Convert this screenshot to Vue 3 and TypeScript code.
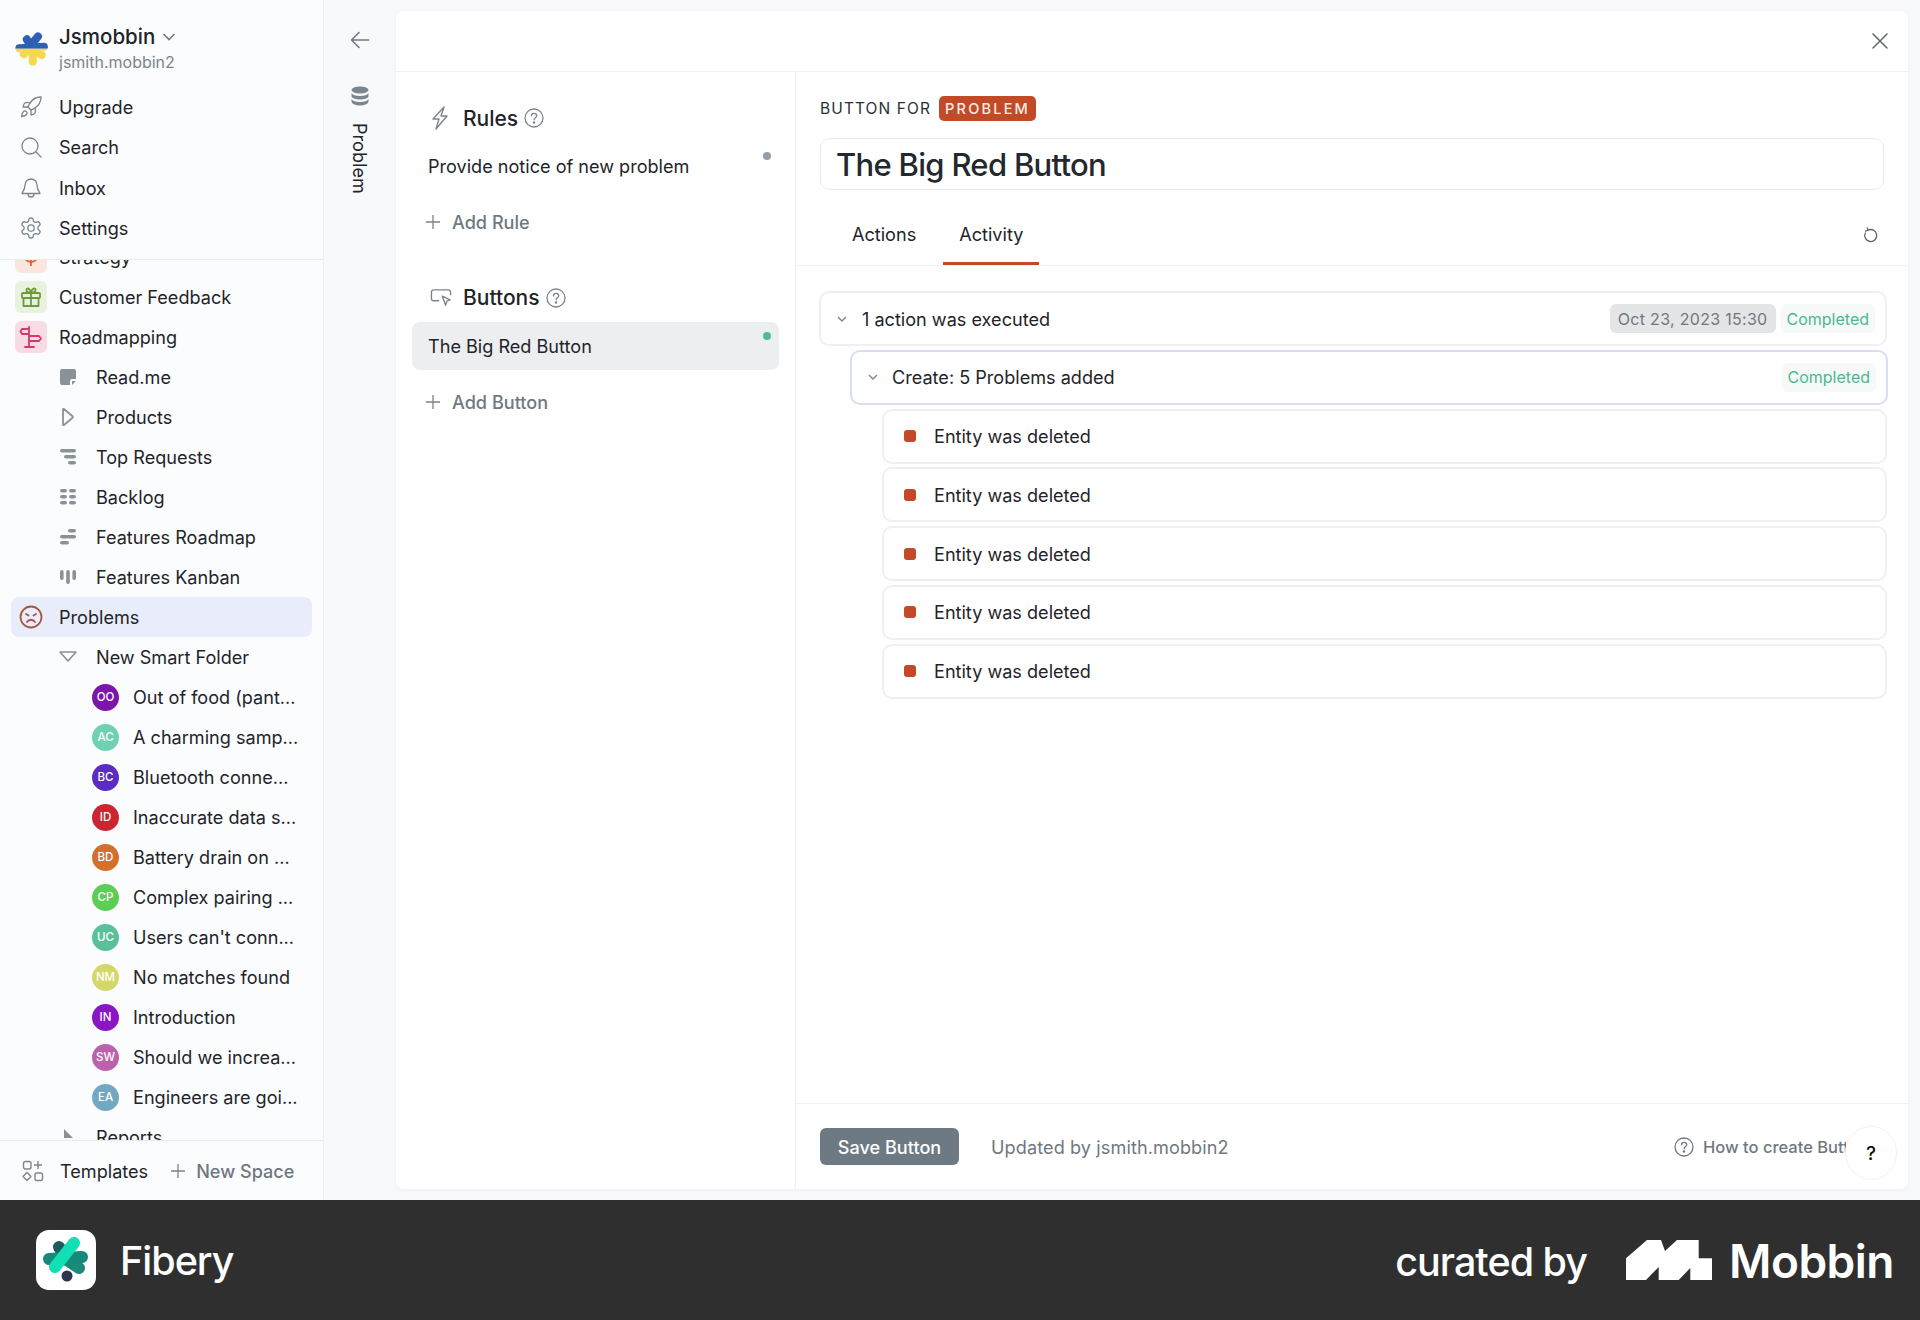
<script setup lang="ts">
const topLinks = [
  { label: 'Upgrade', icon: 'rocket' },
  { label: 'Search', icon: 'search' },
  { label: 'Inbox', icon: 'bell' },
  { label: 'Settings', icon: 'gear' },
];

const views = [
  { label: 'Read.me', icon: 'doc' },
  { label: 'Products', icon: 'tri' },
  { label: 'Top Requests', icon: 'list' },
  { label: 'Backlog', icon: 'grid' },
  { label: 'Features Roadmap', icon: 'gantt' },
  { label: 'Features Kanban', icon: 'kanban' },
];

const problems = [
  { code: 'OO', label: 'Out of food (pant...', color: '#7d16a8' },
  { code: 'AC', label: 'A charming samp...', color: '#6fd0b2' },
  { code: 'BC', label: 'Bluetooth conne...', color: '#5a2cc4' },
  { code: 'ID', label: 'Inaccurate data s...', color: '#cc2430' },
  { code: 'BD', label: 'Battery drain on ...', color: '#d2702c' },
  { code: 'CP', label: 'Complex pairing ...', color: '#5cce56' },
  { code: 'UC', label: "Users can't conn...", color: '#59c09a' },
  { code: 'NM', label: 'No matches found', color: '#d4d86a' },
  { code: 'IN', label: 'Introduction', color: '#8a16c4' },
  { code: 'SW', label: 'Should we increa...', color: '#bc62ac' },
  { code: 'EA', label: 'Engineers are goi...', color: '#72a8c2' },
];

const entities = [1, 2, 3, 4, 5];
</script>

<template>
  <div class="page">
    <div class="app">
      <aside class="sidebar">
        <div class="side-top">
          <div class="workspace">
            <svg class="ws-logo" width="34" height="34" viewBox="0 0 46 46" fill="none" stroke-width="11" stroke-linecap="round">
              <defs>
                <clipPath id="wsTop"><rect x="0" y="0" width="46" height="22.5" /></clipPath>
                <clipPath id="wsBottom"><rect x="0" y="22.5" width="46" height="24" /></clipPath>
                <g id="wsShape">
                  <path d="M31 6L12 30M6 22l33-2M16 10l8 13M36 31L24 23M24 23v17" />
                </g>
              </defs>
              <use href="#wsShape" stroke="#2d5fb4" clip-path="url(#wsTop)" />
              <use href="#wsShape" stroke="#f6d94a" clip-path="url(#wsBottom)" />
            </svg>
            <div class="ws-text">
              <div class="ws-name">
                Jsmobbin
                <svg width="14" height="10" viewBox="0 0 14 10" fill="none" stroke="#6f7880" stroke-width="1.6"><path d="M1.5 2L7 7.5 12.5 2" /></svg>
              </div>
              <div class="ws-user">jsmith.mobbin2</div>
            </div>
          </div>
          <a v-for="l in topLinks" :key="l.label" class="row top-row">
            <span class="top-icon">
              <svg width="24" height="24" viewBox="0 0 24 24" fill="none" stroke="#7b858d" stroke-width="1.3" stroke-linecap="round" stroke-linejoin="round">
                <template v-if="l.icon === 'rocket'">
                  <path d="M4.5 16.5c-1.5 1.26-2 5-2 5s3.74-.5 5-2c.71-.84.7-2.13-.09-2.91a2.18 2.18 0 0 0-2.91-.09z" />
                  <path d="M12 15l-3-3a22 22 0 0 1 2-3.95A12.88 12.88 0 0 1 22 2c0 2.72-.78 7.5-6 11a22.35 22.35 0 0 1-4 2z" />
                  <path d="M9 12H4s.55-3.03 2-4c1.62-1.08 5 0 5 0" />
                  <path d="M12 15v5s3.03-.55 4-2c1.08-1.62 0-5 0-5" />
                </template>
                <template v-else-if="l.icon === 'search'">
                  <circle cx="11" cy="11" r="8" />
                  <path d="M17 17l5 5" />
                </template>
                <template v-else-if="l.icon === 'bell'">
                  <path d="M12 3a6 6 0 0 0-6 6c0 5-3 7.5-3 8.5h18c0-1-3-3.500-3-8.500a6 6 0 0 0-6-6z" />
                  <path d="M9 18a3 3 0 0 0 6 0" />
                </template>
                <template v-else>
                  <path d="M12.22 2h-.44a2 2 0 0 0-2 2v.18a2 2 0 0 1-1 1.73l-.43.25a2 2 0 0 1-2 0l-.15-.08a2 2 0 0 0-2.73.73l-.22.38a2 2 0 0 0 .73 2.73l.15.1a2 2 0 0 1 1 1.72v.51a2 2 0 0 1-1 1.74l-.15.09a2 2 0 0 0-.73 2.73l.22.38a2 2 0 0 0 2.73.73l.15-.08a2 2 0 0 1 2 0l.43.25a2 2 0 0 1 1 1.73V20a2 2 0 0 0 2 2h.44a2 2 0 0 0 2-2v-.18a2 2 0 0 1 1-1.73l.43-.25a2 2 0 0 1 2 0l.15.08a2 2 0 0 0 2.73-.73l.22-.39a2 2 0 0 0-.73-2.73l-.15-.08a2 2 0 0 1-1-1.74v-.5a2 2 0 0 1 1-1.74l.15-.09a2 2 0 0 0 .73-2.73l-.22-.38a2 2 0 0 0-2.73-.73l-.15.08a2 2 0 0 1-2 0l-.43-.25a2 2 0 0 1-1-1.73V4a2 2 0 0 0-2-2z" />
                  <circle cx="12" cy="12" r="3.2" />
                </template>
              </svg>
            </span>
            <span>{{ l.label }}</span>
          </a>
        </div>

        <div class="side-scroll">
          <div class="side-list">
            <a class="row">
              <span class="tile tile-orange">
                <svg width="24" height="24" viewBox="0 0 24 24" fill="none" stroke="#e0623a" stroke-width="1.8"><circle cx="12" cy="10" r="7" /><path d="M12 3v18" /></svg>
              </span>
              <span>Strategy</span>
            </a>
            <a class="row">
              <span class="tile tile-green">
                <svg width="24" height="24" viewBox="0 0 24 24" fill="none" stroke="#6f9a3c" stroke-width="1.8" stroke-linejoin="round">
                  <rect x="3" y="8" width="18" height="5" rx="1" />
                  <path d="M4.5 13v8h15v-8M12 8v13M12 8C9 8 7 6.5 7.5 4.5S11 3 12 8zM12 8c3 0 5-1.5 4.5-3.5S13 3 12 8z" />
                </svg>
              </span>
              <span>Customer Feedback</span>
            </a>
            <a class="row">
              <span class="tile tile-pink">
                <svg width="24" height="24" viewBox="0 0 24 24" fill="none" stroke="#d4386e" stroke-width="1.8" stroke-linejoin="round" stroke-linecap="round">
                  <path d="M10 2v20M6 22h9M10 4H3L1.5 6.5 3 9h7M10 11h10l2 2.5-2 2.5H10" />
                </svg>
              </span>
              <span>Roadmapping</span>
            </a>

            <a v-for="v in views" :key="v.label" class="row sub-row">
              <span class="view-icon">
                <svg width="18" height="18" viewBox="0 0 18 18" fill="#8a9298">
                  <path v-if="v.icon === 'doc'" d="M3 1h12a2 2 0 0 1 2 2v8h-4a2 2 0 0 0-2 2v4H3a2 2 0 0 1-2-2V3a2 2 0 0 1 2-2zM13 13h4l-4 4z" />
                  <path v-else-if="v.icon === 'tri'" d="M4 1.5c0-.6.6-.8 1-.5l8.500 7.200c.5.4.5 1.200 0 1.600L5 17c-.4.3-1 .1-1-.5z" fill="none" stroke="#8a9298" stroke-width="1.8" stroke-linejoin="round" />
                  <g v-else-if="v.icon === 'list'">
                    <rect x="1" y="1" width="16" height="3.6" rx="1.8" />
                    <rect x="5" y="7" width="12" height="3.6" rx="1.8" />
                    <rect x="9" y="13" width="8" height="3.6" rx="1.8" />
                  </g>
                  <g v-else-if="v.icon === 'grid'">
                    <rect x="1" y="1" width="7" height="3.6" rx="1.8" /><rect x="10" y="1" width="7" height="3.6" rx="1.8" />
                    <rect x="1" y="7" width="7" height="3.6" rx="1.8" /><rect x="10" y="7" width="7" height="3.6" rx="1.8" />
                    <rect x="1" y="13" width="7" height="3.6" rx="1.8" /><rect x="10" y="13" width="7" height="3.6" rx="1.8" />
                  </g>
                  <g v-else-if="v.icon === 'gantt'">
                    <rect x="9" y="1" width="8" height="3.6" rx="1.8" />
                    <rect x="1" y="7" width="16" height="3.6" rx="1.8" />
                    <rect x="1" y="13" width="9" height="3.6" rx="1.8" />
                  </g>
                  <g v-else>
                    <rect x="1" y="2" width="3.6" height="10" rx="1.8" />
                    <rect x="7.2" y="2" width="3.6" height="14" rx="1.8" />
                    <rect x="13.4" y="2" width="3.6" height="10" rx="1.8" />
                  </g>
                </svg>
              </span>
              <span>{{ v.label }}</span>
            </a>

            <a class="row row-active">
              <span class="top-icon">
                <svg width="24" height="24" viewBox="0 0 24 24" fill="none" stroke="#a8553f" stroke-width="1.8" stroke-linecap="round">
                  <circle cx="12" cy="12" r="10.5" />
                  <path d="M7 9l2.5 1.5M17 9l-2.5 1.5M8 17c2-3 6-3 8 0" />
                </svg>
              </span>
              <span>Problems</span>
            </a>
            <a class="row sub-row">
              <span class="view-icon">
                <svg width="18" height="18" viewBox="0 0 18 18" fill="none" stroke="#8a9298" stroke-width="1.6" stroke-linejoin="round"><path d="M1 4h16l-8 9z" /></svg>
              </span>
              <span>New Smart Folder</span>
            </a>
            <a v-for="p in problems" :key="p.code" class="row leaf-row">
              <span class="avatar" :style="{ background: p.color }">{{ p.code }}</span>
              <span>{{ p.label }}</span>
            </a>
            <a class="row sub-row">
              <span class="view-icon">
                <svg width="18" height="18" viewBox="0 0 18 18" fill="#8a9298"><path d="M5 1l9 9H5z" /></svg>
              </span>
              <span>Reports</span>
            </a>
          </div>
        </div>

        <div class="side-bottom">
          <svg width="22" height="22" viewBox="0 0 22 22" fill="none" stroke="#7b858d" stroke-width="1.4">
            <rect x="1.5" y="1.5" width="7.5" height="7.5" rx="2" />
            <path d="M16 1v8M12 5h8" />
            <rect x="13" y="13" width="7.5" height="7.5" rx="1.5" />
            <path d="M5 12.5l4 4-4 4-4-4z" stroke-linejoin="round" />
          </svg>
          <span class="tpl">Templates</span>
          <span class="new-space">
            <svg width="16" height="16" viewBox="0 0 16 16" fill="none" stroke="#7b858d" stroke-width="1.3"><path d="M8 1v14M1 8h14" /></svg>
            New Space
          </span>
        </div>
      </aside>

      <div class="strip">
        <svg class="back" width="20" height="18" viewBox="0 0 20 18" fill="none" stroke="#6f7880" stroke-width="1.6" stroke-linecap="round" stroke-linejoin="round"><path d="M1.5 9h17M9 1.5L1.5 9 9 16.5" /></svg>
        <svg class="db" width="18" height="20" viewBox="0 0 18 20" fill="#7b858d">
          <ellipse cx="9" cy="4" rx="8.5" ry="3.5" />
          <path d="M.5 7c1 2 4 3 8.5 3s7.5-1 8.5-3v3.5c-1 2-4 3-8.5 3s-7.5-1-8.5-3z" />
          <path d="M.5 13c1 2 4 3 8.5 3s7.500-1 8.500-3v3c-1 2-4 3.500-8.500 3.500S1.500 18 .5 16z" />
        </svg>
        <span class="strip-label">Problem</span>
      </div>

      <main class="card">
        <header class="card-head">
          <svg width="18" height="18" viewBox="0 0 18 18" fill="none" stroke="#5f676e" stroke-width="1.5" stroke-linecap="round"><path d="M2 2l14 14M16 2L2 16" /></svg>
        </header>
        <div class="card-body">
          <section class="col-left">
            <h3 class="group-title group-rules">
              <span class="group-icon">
                <svg width="18" height="24" viewBox="0 0 18 24" fill="none" stroke="#7b858d" stroke-width="1.4" stroke-linejoin="round"><path d="M13 1L2 13h6l-3 10 11-13h-6l3-9z" /></svg>
              </span>
              Rules
              <svg class="help" width="20" height="20" viewBox="0 0 20 20" fill="none" stroke="#7b858d" stroke-width="1.3"><circle cx="10" cy="10" r="9" /><path d="M7.5 7.8c0-3.2 5.2-3.2 5.2 0 0 2-2.6 2-2.6 4" stroke-linecap="round" /><circle cx="10" cy="14.6" r=".6" /></svg>
            </h3>
            <div class="item">
              <span>Provide notice of new problem</span>
              <i class="dot dot-grey"></i>
            </div>
            <div class="add add-rule">
              <svg width="16" height="16" viewBox="0 0 16 16" fill="none" stroke="#7b858d" stroke-width="1.3"><path d="M8 1v14M1 8h14" /></svg>
              Add Rule
            </div>

            <h3 class="group-title group-buttons">
              <span class="group-icon">
                <svg class="btn-glyph" width="22" height="20" viewBox="0 0 24 22" fill="none" stroke="#7b858d" stroke-width="1.5" stroke-linejoin="round"><path d="M10 14H4a2.5 2.5 0 0 1-2.5-2.5v-7A2.5 2.5 0 0 1 4 2h16a2.5 2.5 0 0 1 2.5 2.5V8" /><path d="M13.5 9l8.5 4-3.5 1.5L17 19z" /></svg>
              </span>
              Buttons
              <svg class="help" width="20" height="20" viewBox="0 0 20 20" fill="none" stroke="#7b858d" stroke-width="1.3"><circle cx="10" cy="10" r="9" /><path d="M7.5 7.8c0-3.2 5.2-3.2 5.2 0 0 2-2.6 2-2.6 4" stroke-linecap="round" /><circle cx="10" cy="14.6" r=".6" /></svg>
            </h3>
            <div class="item item-selected">
              <span>The Big Red Button</span>
              <i class="dot dot-green"></i>
            </div>
            <div class="add add-button">
              <svg width="16" height="16" viewBox="0 0 16 16" fill="none" stroke="#7b858d" stroke-width="1.3"><path d="M8 1v14M1 8h14" /></svg>
              Add Button
            </div>
          </section>

          <section class="col-main">
            <div class="main-top">
              <div class="eyebrow">
                BUTTON FOR <span class="badge">PROBLEM</span>
              </div>
              <div class="title-box">The Big Red Button</div>
            </div>
            <nav class="tabs">
              <a class="tab">Actions</a>
              <a class="tab tab-on">Activity</a>
              <svg class="refresh" width="16" height="16" viewBox="0 0 16 16" fill="none" stroke="#5f676e" stroke-width="1.3" stroke-linecap="round" stroke-linejoin="round"><path d="M5 3.2A6 6 0 1 1 2.3 6" /><path d="M4.2 .8L5 3.2l-2.400 1" /></svg>
            </nav>
            <div class="activity">
              <div class="log log-root">
                <svg class="chev" width="12" height="8" viewBox="0 0 12 8" fill="none" stroke="#7b858d" stroke-width="1.4"><path d="M2 2l4 4 4-4" /></svg>
                <span class="log-text">1 action was executed</span>
                <span class="chip-date">Oct 23, 2023 15:30</span>
                <span class="chip-done">Completed</span>
              </div>
              <div class="log log-action">
                <svg class="chev" width="12" height="8" viewBox="0 0 12 8" fill="none" stroke="#7b858d" stroke-width="1.4"><path d="M2 2l4 4 4-4" /></svg>
                <span class="log-text">Create: 5 Problems added</span>
                <span class="chip-done">Completed</span>
              </div>
              <div v-for="e in entities" :key="e" class="log log-entity">
                <i class="square"></i>
                <span class="log-text">Entity was deleted</span>
              </div>
            </div>
            <footer class="main-foot">
              <button class="save">Save Button</button>
              <span class="updated">Updated by jsmith.mobbin2</span>
              <span class="howto">
                <svg width="20" height="20" viewBox="0 0 20 20" fill="none" stroke="#6f7880" stroke-width="1.3"><circle cx="10" cy="10" r="9" /><path d="M7.5 7.8c0-3.2 5.2-3.2 5.2 0 0 2-2.6 2-2.6 4" stroke-linecap="round" /><circle cx="10" cy="14.6" r=".6" /></svg>
                <span class="howto-text">How to create Butt</span>
              </span>
            </footer>
          </section>
        </div>
        <div class="help-fab">?</div>
      </main>
    </div>

    <div class="credit">
      <div class="credit-left">
        <span class="fibery-tile">
          <svg width="46" height="46" viewBox="0 0 46 46" fill="none" stroke-width="12" stroke-linecap="round">
            <circle cx="24" cy="39" r="5.5" fill="#2a3550" />
            <path d="M16 10l8 13" stroke="#1d5c5e" />
            <path d="M36 31L24 23" stroke="#1c8a7b" />
            <path d="M6 22l33-2" stroke="#17897a" />
            <path d="M31 6L12 30" stroke="#12dfb3" />
          </svg>
        </span>
        <span class="fibery-name">Fibery</span>
      </div>
      <div class="credit-right">
        <span class="curated">curated by</span>
        <svg class="mobbin-mark" width="86" height="40" viewBox="0 0 86 40" fill="#fff">
          <path d="M0 40V18.3L21 0h14l4 11L51 0h21.7v18.3H86V40H64.3V28L52.7 40h-20V27L20 40z" />
        </svg>
        <span class="mobbin-name">Mobbin</span>
      </div>
    </div>
  </div>
</template>

<style>
html, body { margin: 0; background: #2f2f2f; }
</style>

<style scoped>
.page {
  width: 1920px;
  height: 1320px;
  display: flex;
  flex-direction: column;
  font-family: Inter, "Liberation Sans", sans-serif;
  font-size: 18.1px;
  color: #1f2429;
}
.app {
  height: 1200px;
  display: flex;
  background: #f8f9fb;
}

/* sidebar */
.sidebar {
  width: 323px;
  flex: none;
  display: flex;
  flex-direction: column;
  background: #fbfcfe;
  border-right: 1px solid #eef0f3;
}
.side-top {
  height: 260px;
  flex: none;
  padding: 0 0 0 15px;
  box-sizing: border-box;
  background: #fbfcfe;
  border-bottom: 1px solid #e9ebee;
}
.workspace {
  height: 87px;
  display: flex;
  align-items: center;
  gap: 10px;
  padding-top: 9px;
  box-sizing: border-box;
}
.ws-logo { flex: none; margin-top: 1px; }
.ws-name {
  font-size: 20.5px;
  font-weight: 500;
  line-height: 26px;
  display: flex;
  align-items: center;
  gap: 7px;
}
.ws-user {
  font-size: 16px;
  line-height: 22px;
  color: #7b858d;
  margin-top: 1px;
}
.row {
  height: 40px;
  display: flex;
  align-items: center;
  white-space: nowrap;
}
.top-row { height: 40.3px; }
.top-icon {
  width: 32px;
  margin-right: 12px;
  display: flex;
  justify-content: center;
  flex: none;
}
.side-scroll {
  flex: 1;
  overflow: hidden;
  min-height: 0;
}
.side-list {
  margin-top: -23px;
  padding-left: 15px;
}
.tile {
  width: 32px;
  height: 32px;
  border-radius: 6px;
  margin-right: 12px;
  display: flex;
  align-items: center;
  justify-content: center;
  flex: none;
}
.tile-orange { background: #fbe6de; }
.tile-green { background: #e9f2df; }
.tile-pink { background: #f8dbe5; }
.sub-row { padding-left: 44px; }
.view-icon {
  width: 18px;
  margin-right: 19px;
  display: flex;
  flex: none;
}
.leaf-row { padding-left: 77px; }
.avatar {
  width: 27px;
  height: 27px;
  border-radius: 50%;
  margin-right: 14px;
  color: #fff;
  font-size: 11.5px;
  font-weight: 500;
  display: flex;
  align-items: center;
  justify-content: center;
  flex: none;
}
.row-active {
  background: #e9edfb;
  border-radius: 8px;
  margin: 0 11px 0 -4px;
  padding-left: 4px;
}
.side-bottom {
  height: 60px;
  flex: none;
  display: flex;
  align-items: center;
  padding-left: 22px;
  box-sizing: border-box;
  background: #fbfcfe;
  border-top: 1px solid #e9ebee;
}
.tpl { margin-left: 16px; }
.new-space {
  margin-left: 22px;
  color: #6f7880;
  font-weight: 500;
  display: flex;
  align-items: center;
  gap: 10px;
}

/* collapsed strip */
.strip {
  width: 72px;
  flex: none;
  display: flex;
  flex-direction: column;
  align-items: center;
  padding-top: 31px;
  box-sizing: border-box;
}
.db { margin-top: 37px; }
.strip-label {
  writing-mode: vertical-rl;
  margin-top: 17px;
  line-height: 22px;
}

/* card */
.card {
  position: relative;
  width: 1512px;
  height: 1178px;
  margin-top: 11px;
  background: #fff;
  border-radius: 8px;
  box-shadow: 0 1px 4px rgba(30, 40, 60, 0.06);
  display: flex;
  flex-direction: column;
  overflow: hidden;
}
.card-head {
  height: 60px;
  flex: none;
  border-bottom: 1px solid #f0f1f3;
  display: flex;
  align-items: center;
  justify-content: flex-end;
  padding: 0 19px 0 0;
}
.card-body {
  flex: 1;
  display: flex;
  min-height: 0;
}
.col-left {
  width: 400px;
  flex: none;
  border-right: 1px solid #f0f1f3;
  padding: 26px 16px 0 16px;
  box-sizing: border-box;
}
.group-title {
  margin: 0;
  height: 40px;
  display: flex;
  align-items: center;
  font-size: 21px;
  font-weight: 500;
}
.group-rules { margin-bottom: 3.5px; }
.group-icon {
  width: 24px;
  padding-left: 16px;
  margin-right: 11px;
  display: flex;
  justify-content: center;
  flex: none;
}
.btn-glyph { margin-left: 2px; }
.help { margin-left: 6px; }
.item {
  position: relative;
  height: 48px;
  display: flex;
  align-items: center;
  padding-left: 16px;
  border-radius: 8px;
}
.item-selected { background: #eceef0; }
.dot {
  position: absolute;
  right: 8px;
  top: 10px;
  width: 8px;
  height: 8px;
  border-radius: 50%;
}
.dot-grey { background: #959ea6; }
.dot-green { background: #4fbb91; }
.add {
  display: flex;
  align-items: center;
  gap: 11px;
  padding-left: 13px;
  color: #6f7880;
  font-weight: 500;
  height: 32px;
}
.add-rule { margin-top: 16px; }
.add-button { margin-top: 16px; }
.group-buttons { margin-top: 40px; margin-bottom: 4px; }

.col-main {
  flex: 1;
  min-width: 0;
  display: flex;
  flex-direction: column;
}
.main-top { padding: 0 24px 0 24px; }
.eyebrow {
  height: 26px;
  margin-top: 23px;
  display: flex;
  align-items: center;
  font-size: 15.5px;
  letter-spacing: 1.1px;
  color: #2a2f34;
}
.badge {
  margin-left: 8px;
  height: 25px;
  padding: 0 6px;
  background: #c24a27;
  color: #fdece6;
  border-radius: 5px;
  font-size: 14.5px;
  font-weight: 500;
  letter-spacing: 2.2px;
  display: flex;
  align-items: center;
}
.title-box {
  height: 50px;
  margin-top: 17px;
  border: 1px solid #e8eaed;
  border-radius: 10px;
  padding-left: 15px;
  font-size: 31px;
  font-weight: 500;
  letter-spacing: -0.7px;
  display: flex;
  align-items: center;
  color: #23282d;
}
.tabs {
  height: 75px;
  flex: none;
  display: flex;
  align-items: flex-end;
  padding-left: 40px;
  position: relative;
  border-bottom: 1px solid #f0f1f3;
}
.tab {
  height: 53px;
  padding: 0 16px 9px 16px;
  display: flex;
  align-items: center;
  box-sizing: border-box;
  margin-right: 11px;
}
.tab-on {
  border-bottom: 3px solid #c24a27;
  padding-bottom: 6px;
  width: 96px;
}
.refresh { position: absolute; right: 29px; bottom: 22px; }
.activity {
  flex: 1;
  display: flex;
  flex-direction: column;
  gap: 3.8px;
  padding: 25px 21px 0 23px;
  min-height: 0;
}
.log {
  height: 55px;
  flex: none;
  border: 2px solid #eef0f2;
  border-radius: 10px;
  box-sizing: border-box;
  display: flex;
  align-items: center;
  padding-right: 10px;
  background: #fff;
}
.chev { margin: 0 14px 0 15px; flex: none; }
.log-text { flex: 1; }
.log-action {
  margin-left: 31px;
  margin-right: -1px;
  border-color: #d8ddf2;
}
.log-action .chev { margin-right: 13px; }
.log-entity {
  margin-left: 63px;
  padding-left: 20px;
}
.square {
  width: 12px;
  height: 12px;
  border-radius: 3px;
  background: #c24a27;
  margin-right: 18px;
  flex: none;
}
.chip-date {
  height: 29px;
  padding: 0 8px;
  border-radius: 6px;
  background: #e3e5e7;
  color: #6f7880;
  font-size: 16px;
  letter-spacing: 0.3px;
  display: flex;
  align-items: center;
}
.chip-done {
  height: 29px;
  margin-left: 5px;
  padding: 0 6px;
  border-radius: 6px;
  background: #f5faf8;
  color: #4fb78f;
  font-size: 16px;
  display: flex;
  align-items: center;
}
.main-foot {
  height: 86px;
  flex: none;
  border-top: 1px solid #f0f1f3;
  display: flex;
  align-items: center;
  padding-left: 24px;
  box-sizing: border-box;
}
.save {
  width: 139px;
  height: 37px;
  border: 0;
  border-radius: 6px;
  background: #6e7a83;
  color: #fff;
  font: 500 18.1px Inter, "Liberation Sans", sans-serif;
}
.updated {
  margin-left: 32px;
  color: #6f7880;
  letter-spacing: 0.1px;
}
.howto {
  margin-left: auto;
  margin-right: 62px;
  display: flex;
  align-items: center;
  gap: 9px;
  color: #6f7880;
  font-size: 16.5px;
  font-weight: 500;
}
.howto-text {
  width: 143px;
  overflow: hidden;
  white-space: nowrap;
}
.help-fab {
  position: absolute;
  right: 11px;
  bottom: 9px;
  width: 52px;
  height: 54px;
  border-radius: 50%;
  background: #fff;
  border: 1px solid #f0f1f3;
  box-sizing: border-box;
  display: flex;
  align-items: center;
  justify-content: center;
  font-size: 19px;
  font-weight: 500;
  color: #111;
}

/* credit band */
.credit {
  height: 120px;
  flex: none;
  background: #2f2f2f;
  color: #fff;
  display: flex;
  align-items: center;
  justify-content: space-between;
  padding: 0 26px 0 36px;
}
.credit-left, .credit-right { display: flex; align-items: center; }
.fibery-tile {
  width: 60px;
  height: 60px;
  background: #fff;
  border-radius: 13px;
  display: flex;
  align-items: center;
  justify-content: center;
}
.fibery-name {
  margin: 2px 0 0 24px;
  font-size: 39.5px;
  font-weight: 500;
  letter-spacing: -1px;
}
.curated {
  margin-top: 3px;
  font-size: 39.5px;
  font-weight: 500;
  letter-spacing: -1px;
}
.mobbin-mark { margin-left: 39px; }
.mobbin-name {
  margin: 2px 0 0 17px;
  font-size: 46px;
  font-weight: 600;
  letter-spacing: -0.5px;
}
</style>
